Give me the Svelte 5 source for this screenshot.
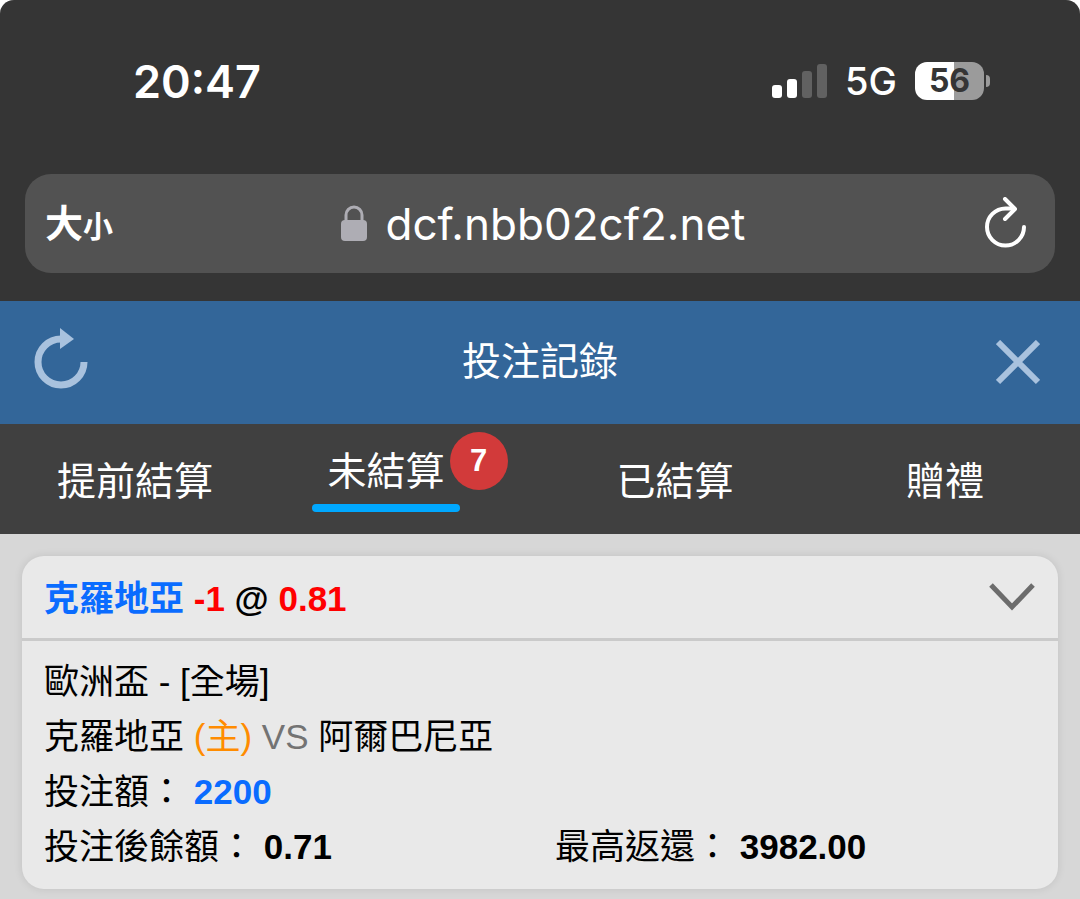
<script lang="ts">
  const signalBars = [
    { height: 13, on: true },
    { height: 19, on: true },
    { height: 27, on: false },
    { height: 34, on: false }
  ];

  const tabs = [
    { id: 'early', label: '提前結算', count: 0 },
    { id: 'open', label: '未結算', count: 7 },
    { id: 'settled', label: '已結算', count: 0 },
    { id: 'gift', label: '贈禮', count: 0 }
  ];

  const bet = {
    pick: '克羅地亞',
    handicap: '-1',
    odds: '0.81',
    league: '歐洲盃 - [全場]',
    home: '克羅地亞',
    away: '阿爾巴尼亞',
    stake: '2200',
    balance: '0.71',
    maxReturn: '3982.00'
  };

  let activeTab = $state('open');
  let expanded = $state(true);
</script>

<div class="phone">
  <div class="browser">
    <div class="status-bar">
      <time class="clock">20:47</time>
      <div class="status-right">
        <div class="signal">
          {#each signalBars as bar}
            <span class="bar" class:on={bar.on} style="height: {bar.height}px"></span>
          {/each}
        </div>
        <span class="network">5G</span>
        <div class="battery">
          <span class="battery-body">56</span>
          <span class="battery-tip"></span>
        </div>
      </div>
    </div>

    <div class="address-bar">
      <button class="text-size"><span class="big">大</span><span class="small">小</span></button>
      <div class="address">
        <svg class="lock" width="26" height="38" viewBox="0 0 26 38" aria-hidden="true">
          <path d="M5 18V10a8 8 0 0 1 16 0v8" fill="none" stroke="#aeadb4" stroke-width="3" />
          <rect x="0" y="15" width="26" height="21" rx="4" fill="#aeadb4" />
        </svg>
        <span>dcf.nbb02cf2.net</span>
      </div>
      <button class="reload" aria-label="重新載入">
        <svg width="42" height="54" viewBox="0 0 42 54" fill="none" stroke="#fff" stroke-width="4" stroke-linecap="round" stroke-linejoin="round">
          <path d="M39 30A18.500 18.500 0 1 1 20.500 11.500H29" />
          <path d="M20 2L30 12L20 22" />
        </svg>
      </button>
    </div>
  </div>

  <header class="page-header">
    <button aria-label="重新整理">
      <svg width="54" height="70" viewBox="0 0 54 70">
        <path d="M50 34A23 23 0 1 1 27 11" fill="none" stroke="#a9c2de" stroke-width="7" />
        <path d="M26 0L40 11L26 21Z" fill="#a9c2de" />
      </svg>
    </button>
    <h1>投注記錄</h1>
    <button class="close" aria-label="關閉">
      <svg width="44" height="46" viewBox="0 0 44 46" stroke="#a9c2de" stroke-width="6">
        <path d="M2 2L42 42M42 2L2 42" />
      </svg>
    </button>
  </header>

  <nav class="tabs">
    {#each tabs as tab (tab.id)}
      <button class="tab" class:active={activeTab === tab.id} onclick={() => (activeTab = tab.id)}>
        <span class="tab-label">{tab.label}</span>
        {#if tab.count > 0}
          <span class="badge">{tab.count}</span>
        {/if}
      </button>
    {/each}
  </nav>

  <main>
    <article class="card">
      <div class="card-head">
        <h2>
          <span class="blue">{bet.pick}</span>
          <span class="red">{bet.handicap}</span>
          @
          <span class="red">{bet.odds}</span>
        </h2>
        <button aria-label="展開" aria-expanded={expanded} onclick={() => (expanded = !expanded)}>
          <svg width="48" height="28" viewBox="0 0 48 28" fill="none" stroke="#6c6c6c" stroke-width="5">
            <path d="M3 2L24 24L45 2" />
          </svg>
        </button>
      </div>
      {#if expanded}
        <div class="card-body">
          <p>{bet.league}</p>
          <p>{bet.home} <span class="host">(主)</span> <span class="versus">VS</span> {bet.away}</p>
          <p>投注額： <b class="blue">{bet.stake}</b></p>
          <div class="totals">
            <p>投注後餘額： <b>{bet.balance}</b></p>
            <p>最高返還： <b>{bet.maxReturn}</b></p>
          </div>
        </div>
      {/if}
    </article>
  </main>
</div>

<style>
  :global(body) {
    margin: 0;
    background: #fff;
  }

  .phone {
    min-height: 100vh;
    display: flex;
    flex-direction: column;
    border-radius: 14px 14px 0 0;
    overflow: hidden;
    background: #d7d7d7;
    font-family: "Liberation Sans", "Noto Sans CJK TC", sans-serif;
  }

  button {
    display: flex;
    align-items: center;
    padding: 0;
    border: 0;
    background: none;
    color: inherit;
    font: inherit;
    cursor: pointer;
  }

  svg {
    display: block;
  }

  .browser {
    padding: 50px 25px 28px;
    background: #353535;
    color: #fff;
    font-family: Inter, "Noto Sans CJK TC", sans-serif;
  }

  .status-bar {
    display: flex;
    justify-content: space-between;
    align-items: center;
    height: 62px;
    margin-bottom: 62px;
    padding: 0 65px 0 108px;
  }

  .clock {
    font-size: 45px;
    font-weight: 600;
  }

  .status-right {
    display: flex;
    align-items: center;
    gap: 18px;
  }

  .signal {
    display: flex;
    align-items: flex-end;
    gap: 5px;
  }

  .bar {
    width: 10px;
    border-radius: 3px;
    background: #616161;
  }

  .bar.on {
    background: #fff;
  }

  .network {
    font-size: 38px;
    font-weight: 500;
  }

  .battery {
    display: flex;
    align-items: center;
    gap: 2px;
  }

  .battery-body {
    width: 69px;
    border-radius: 12px;
    background: linear-gradient(90deg, #fff 56%, #9b9b9b 56%);
    color: #353535;
    font-size: 32px;
    font-weight: 700;
    line-height: 38px;
    text-align: center;
  }

  .battery-tip {
    width: 4px;
    height: 12px;
    border-radius: 0 6px 6px 0;
    background: #9b9b9b;
  }

  .address-bar {
    display: flex;
    align-items: center;
    justify-content: space-between;
    height: 99px;
    padding: 0 28px 0 20px;
    border-radius: 26px;
    background: #525252;
  }

  .text-size {
    align-items: baseline;
    padding-bottom: 6px;
    font-weight: 700;
  }

  .text-size .big {
    font-size: 38px;
  }

  .text-size .small {
    font-size: 30px;
  }

  .address {
    display: flex;
    align-items: center;
    gap: 19px;
    padding-right: 12px;
    font-size: 44px;
  }

  .page-header {
    display: grid;
    grid-template-columns: 1fr auto 1fr;
    align-items: center;
    height: 123px;
    padding: 0 40px 0 34px;
    background: #336699;
    color: #fff;
  }

  .close {
    justify-self: end;
  }

  h1 {
    margin: 0;
    padding: 0 0 10px 6px;
    font-size: 39px;
    font-weight: 400;
  }

  .tabs {
    display: grid;
    grid-template-columns: repeat(4, 1fr);
    height: 110px;
    background: #404040;
    color: #fff;
    font-size: 39px;
  }

  .tab {
    justify-content: center;
  }

  .tab-label {
    padding-top: 6px;
    line-height: 54px;
  }

  .tab.active .tab-label {
    padding: 0 15px 2px;
  }

  .tab.active .tab-label::after {
    content: "";
    display: block;
    height: 8px;
    margin: 5px -15px 0;
    border-radius: 4px;
    background: #00a8ff;
  }

  .badge {
    align-self: flex-start;
    width: 58px;
    margin: 8px -10px 0;
    border-radius: 50%;
    background: #d23a3a;
    font-size: 31px;
    font-weight: 700;
    line-height: 58px;
    text-align: center;
  }

  main {
    padding: 22px 22px 10px;
  }

  .card {
    border-radius: 22px;
    background: #e9e9e9;
    box-shadow: 0 0 8px rgba(0, 0, 0, 0.1);
    color: #000;
    font-size: 35px;
  }

  .card-head {
    display: flex;
    align-items: center;
    justify-content: space-between;
    height: 82px;
    padding: 0 22px;
    border-bottom: 3px solid #cacaca;
  }

  h2 {
    margin: 0;
    padding-bottom: 4px;
    font-size: 35px;
    font-weight: 700;
  }

  .card-body {
    padding: 13px 22px 15px;
    line-height: 55px;
  }

  p {
    margin: 0;
  }

  .totals {
    display: grid;
    grid-template-columns: 511fr 481fr;
  }

  .blue {
    color: #0a6cff;
  }

  .red {
    color: #ff0000;
  }

  .host {
    color: #ff8c00;
  }

  .versus {
    color: #737373;
  }
</style>
